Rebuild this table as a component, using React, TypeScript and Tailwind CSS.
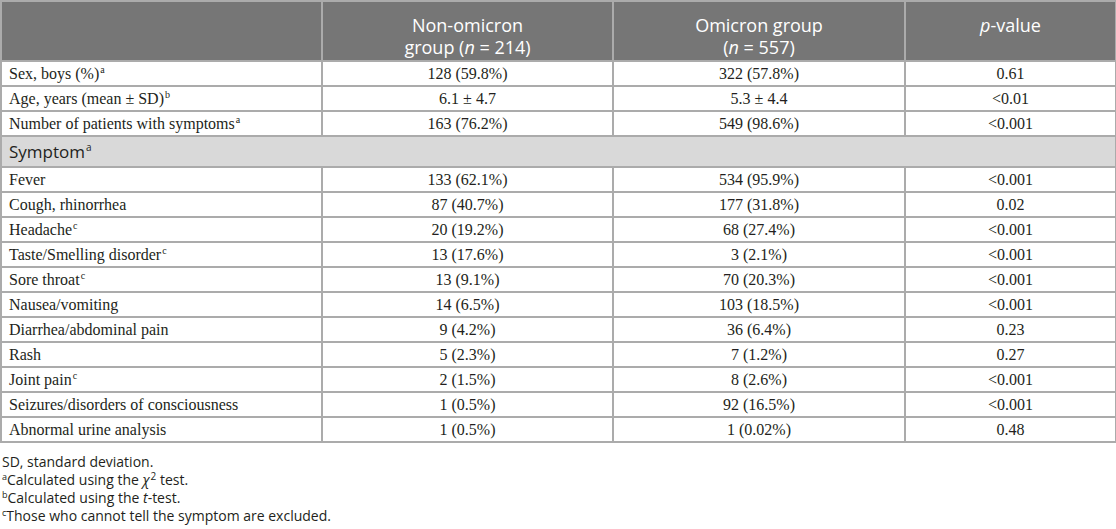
const rowsTop = [
  { label: "Sex, boys (%)", sup: "a", a: "128 (59.8%)", b: "322 (57.8%)", p: "0.61" },
  { label: "Age, years (mean ± SD)", sup: "b", a: "6.1 ± 4.7", b: "5.3 ± 4.4", p: "<0.01" },
  { label: "Number of patients with symptoms", sup: "a", a: "163 (76.2%)", b: "549 (98.6%)", p: "<0.001" },
];

const rowsSymptom = [
  { label: "Fever", sup: "", a: "133 (62.1%)", b: "534 (95.9%)", p: "<0.001" },
  { label: "Cough, rhinorrhea", sup: "", a: "87 (40.7%)", b: "177 (31.8%)", p: "0.02" },
  { label: "Headache", sup: "c", a: "20 (19.2%)", b: "68 (27.4%)", p: "<0.001" },
  { label: "Taste/Smelling disorder", sup: "c", a: "13 (17.6%)", b: "3 (2.1%)", p: "<0.001" },
  { label: "Sore throat", sup: "c", a: "13 (9.1%)", b: "70 (20.3%)", p: "<0.001" },
  { label: "Nausea/vomiting", sup: "", a: "14 (6.5%)", b: "103 (18.5%)", p: "<0.001" },
  { label: "Diarrhea/abdominal pain", sup: "", a: "9 (4.2%)", b: "36 (6.4%)", p: "0.23" },
  { label: "Rash", sup: "", a: "5 (2.3%)", b: "7 (1.2%)", p: "0.27" },
  { label: "Joint pain", sup: "c", a: "2 (1.5%)", b: "8 (2.6%)", p: "<0.001" },
  { label: "Seizures/disorders of consciousness", sup: "", a: "1 (0.5%)", b: "92 (16.5%)", p: "<0.001" },
  { label: "Abnormal urine analysis", sup: "", a: "1 (0.5%)", b: "1 (0.02%)", p: "0.48" },
];

type Row = (typeof rowsTop)[number];

const cell = "border-2 border-[#ababab] h-[25px] py-0 leading-[21px]";

function DataRow({ r }: { r: Row }) {
  return (
    <tr>
      <td className={`${cell} pl-[7px] text-left`}>
        {r.label}
        {r.sup && <sup className="text-[10px] ml-[1px] -top-[6px]">{r.sup}</sup>}
      </td>
      <td className={`${cell} text-center`}>{r.a}</td>
      <td className={`${cell} text-center`}>{r.b}</td>
      <td className={`${cell} text-center`}>{r.p}</td>
    </tr>
  );
}

export default function App() {
  return (
    <div className="w-[1116px] h-[529px] bg-white overflow-hidden">
      <table className="w-[1115px] border-collapse table-fixed text-[16px] text-[#231f20] font-['Liberation_Serif',serif]">
        <colgroup>
          <col className="w-[321px]" />
          <col className="w-[291px]" />
          <col className="w-[292px]" />
          <col className="w-[211px]" />
        </colgroup>
        <thead>
          <tr className="bg-[#767676] text-white font-['Open_Sans',sans-serif] text-[18px] leading-[22px]">
            <th className="border-2 border-[#ababab] h-[60px] align-top pt-[12px] font-normal"></th>
            <th className="border-2 border-[#ababab] align-top pt-[12px] font-normal">
              Non-omicron
              <br />
              group (<i>n</i> = 214)
            </th>
            <th className="border-2 border-[#ababab] align-top pt-[12px] font-normal">
              Omicron group
              <br />
              (<i>n</i> = 557)
            </th>
            <th className="border-2 border-[#ababab] align-top pt-[12px] font-normal">
              <i>p</i>-value
            </th>
          </tr>
        </thead>
        <tbody>
          {rowsTop.map((r) => (
            <DataRow key={r.label} r={r} />
          ))}
          <tr className="bg-[#d9d9d9]">
            <td
              colSpan={4}
              className="border-2 border-[#ababab] h-[31px] pl-[7px] font-['Open_Sans',sans-serif] text-[17px] leading-[22px]"
            >
              Symptom<sup className="text-[10px] ml-[1px] -top-[7px]">a</sup>
            </td>
          </tr>
          {rowsSymptom.map((r) => (
            <DataRow key={r.label} r={r} />
          ))}
        </tbody>
      </table>

      {/* Footnotes */}
      <div className="mt-[10px] pl-[2px] font-['Open_Sans',sans-serif] text-[14px] leading-[18px] text-[#231f20]">
        <p>SD, standard deviation.</p>
        <p>
          <sup className="text-[9px] -top-[5px]">a</sup>Calculated using the <i>χ</i>
          <sup className="text-[10px] -top-[5px] ml-[1px]">2</sup> test.
        </p>
        <p>
          <sup className="text-[9px] -top-[5px]">b</sup>Calculated using the <i>t</i>-test.
        </p>
        <p>
          <sup className="text-[9px] -top-[5px]">c</sup>Those who cannot tell the symptom are excluded.
        </p>
      </div>
    </div>
  );
}
